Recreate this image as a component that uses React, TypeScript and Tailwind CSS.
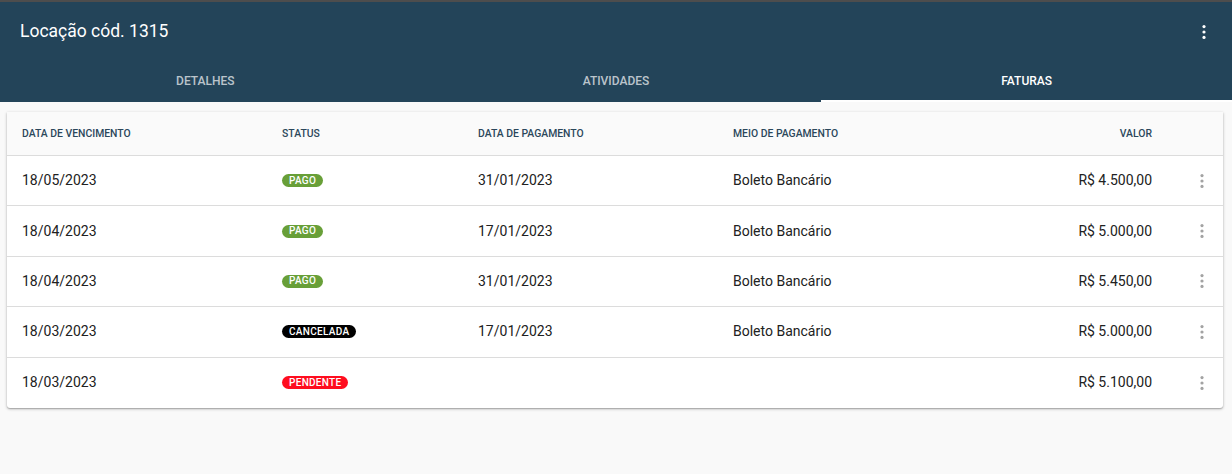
import React from "react";

type Row = { venc: string; status: "PAGO" | "CANCELADA" | "PENDENTE"; pag: string; meio: string; valor: string };

const rows: Row[] = [
  { venc: "18/05/2023", status: "PAGO", pag: "31/01/2023", meio: "Boleto Bancário", valor: "R$ 4.500,00" },
  { venc: "18/04/2023", status: "PAGO", pag: "17/01/2023", meio: "Boleto Bancário", valor: "R$ 5.000,00" },
  { venc: "18/04/2023", status: "PAGO", pag: "31/01/2023", meio: "Boleto Bancário", valor: "R$ 5.450,00" },
  { venc: "18/03/2023", status: "CANCELADA", pag: "17/01/2023", meio: "Boleto Bancário", valor: "R$ 5.000,00" },
  { venc: "18/03/2023", status: "PENDENTE", pag: "", meio: "", valor: "R$ 5.100,00" },
];

function Badge({ s }: { s: Row["status"] }) {
  const cls =
    s === "PAGO" ? "bg-[#689f38]" : s === "CANCELADA" ? "bg-[#000000]" : "bg-[#ff0d1f]";
  return (
    <span className={`${cls} inline-flex items-center h-[13px] px-[7px] rounded-full text-white text-[10px] font-medium leading-none tracking-[0.3px]`}>
      {s}
    </span>
  );
}

function Kebab({ color, size }: { color: string; size: number }) {
  return (
    <svg width={4} height={size} viewBox={`0 0 4 ${size}`}>
      <circle cx={2} cy={1.6} r={1.6} fill={color} />
      <circle cx={2} cy={size / 2} r={1.6} fill={color} />
      <circle cx={2} cy={size - 1.6} r={1.6} fill={color} />
    </svg>
  );
}

export default function App() {
  const grid = "grid grid-cols-[260px_196px_255px_1fr_160px_71px] pl-[15px] items-center";
  return (
    <div className="min-h-[474px] bg-[#f9f9f9] font-['Roboto',sans-serif]">
      <div className="bg-[#234459] border-t-2 border-[#4d4d4d]">
        <div className="h-[57px] flex items-center justify-between pl-[20px] pr-[26px] pt-[3px]">
          <span className="text-white text-[17.5px] leading-none">Locação cód. 1315</span>
          <Kebab color="#ffffff" size={14} />
        </div>
        <div className="grid grid-cols-3 h-[43px]">
          <div className="flex items-center justify-center text-[12px] font-medium text-white/70 pt-[1px]">DETALHES</div>
          <div className="flex items-center justify-center text-[12px] font-medium text-white/70 pt-[1px]">ATIVIDADES</div>
          <div className="flex items-center justify-center text-[12px] font-medium text-white border-b-2 border-white pt-[3px]">FATURAS</div>
        </div>
      </div>
      <div className="ml-[7px] mr-[9px] mt-[10px] bg-white rounded-b-[3px] shadow-[0_1px_3px_rgba(0,0,0,0.3),0_1px_1px_rgba(0,0,0,0.14)] overflow-hidden">
        <div className={`${grid} h-[44px] bg-[#fafafa] border-b border-[#dcdcdc] text-[10.4px] font-medium text-[#2b475b]`}>
          <div>DATA DE VENCIMENTO</div>
          <div>STATUS</div>
          <div>DATA DE PAGAMENTO</div>
          <div>MEIO DE PAGAMENTO</div>
          <div className="text-right">VALOR</div>
          <div />
        </div>
        {rows.map((r, i) => (
          <div
            key={i}
            className={`${grid} h-[50.4px] text-[14px] text-[#212121] ${i < rows.length - 1 ? "border-b border-[#dcdcdc]" : ""}`}
          >
            <div>{r.venc}</div>
            <div className="flex items-center">
              <Badge s={r.status} />
            </div>
            <div>{r.pag}</div>
            <div>{r.meio}</div>
            <div className="text-right whitespace-nowrap">{r.valor}</div>
            <div className="flex justify-end pr-[19px]">
              <Kebab color="#a3a3a3" size={14} />
            </div>
          </div>
        ))}
      </div>
    </div>
  );
}
